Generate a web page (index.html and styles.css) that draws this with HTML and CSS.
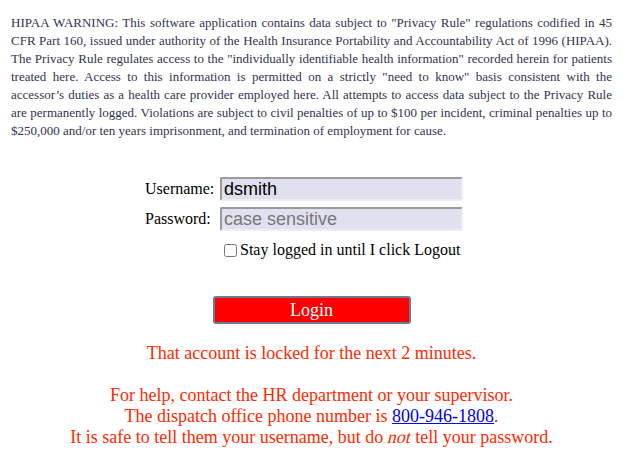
FILE: index.html
```html
<!DOCTYPE html>
<html>
<head>
<meta charset="utf-8">
<link rel="stylesheet" href="styles.css">
</head>
<body>
<div class="page">
  <p class="warning">HIPAA WARNING: This software application contains data subject to "Privacy Rule" regulations codified in 45 CFR Part 160, issued under authority of the Health Insurance Portability and Accountability Act of 1996 (HIPAA). The Privacy Rule regulates access to the "individually identifiable health information" recorded herein for patients treated here. Access to this information is permitted on a strictly "need to know" basis consistent with the accessor’s duties as a health care provider employed here. All attempts to access data subject to the Privacy Rule are permanently logged. Violations are subject to civil penalties of up to $100 per incident, criminal penalties up to $250,000 and/or ten years imprisonment, and termination of employment for cause.</p>
  <form class="login">
    <label class="lbl" for="u">Username:</label>
    <input class="field" id="u" type="text" value="dsmith">
    <label class="lbl" for="p">Password:</label>
    <input class="field" id="p" type="password" placeholder="case sensitive">
    <label class="stay"><input class="chk" type="checkbox">Stay logged in until I click Logout</label>
  </form>
  <div class="actions">
    <button class="btn" type="button">Login</button>
  </div>
  <p class="locked">That account is locked for the next 2 minutes.</p>
  <p class="help">For help, contact the HR department or your supervisor.<br>The dispatch office phone number is <a class="phone" href="#">800-946-1808</a>.<br>It is safe to tell them your username, but do <em class="neg">not</em> tell your password.</p>
</div>
</body>
</html>
```
FILE: styles.css
```css
html, body { background: #fff; }
body {
  margin: 8px;
  font-family: "Liberation Serif", serif;
  color: #000;
}
.page { padding: 0 3px; }
.warning {
  margin: 6px 0 0;
  font-size: 13px;
  line-height: 18px;
  text-align: justify;
  color: #333350;
}
.login {
  display: grid;
  grid-template-columns: 75px 243px;
  row-gap: 6px;
  align-items: center;
  margin: 37px 0 0 134px;
  font-size: 16px;
}
.lbl { line-height: 24px; }
.field {
  box-sizing: border-box;
  width: 243px;
  height: 24px;
  margin: 0;
  padding: 0 2px;
  font-family: "Liberation Sans", Arial, sans-serif;
  font-size: 18px;
  color: #000;
  background: #e0e0ee;
  border: 2px solid #ececf2;
  border-top-color: #9a9a9a;
  border-left-color: #9a9a9a;
  border-radius: 2px;
  outline: none;
}
.field::placeholder { color: #777; }
.stay {
  grid-column: 2;
  display: flex;
  align-items: center;
  margin-top: 3px;
  padding-left: 3px;
  line-height: 20px;
}
.chk {
  width: 13px;
  height: 13px;
  margin: 0 3px 0 1px;
}
.actions {
  display: flex;
  justify-content: center;
  margin-top: 36px;
}
.btn {
  box-sizing: border-box;
  width: 198px;
  height: 28px;
  padding: 0;
  background: #ff0000;
  color: #fff;
  font-family: "Liberation Serif", serif;
  font-size: 18px;
  border: 2px solid #6b7b8c;
  border-radius: 3px;
}
.locked {
  margin: 19px 0 0;
  text-align: center;
  font-size: 18px;
  color: #ff2a00;
}
.help {
  margin: 21px 0 0;
  text-align: center;
  font-size: 18px;
  color: #ff2a00;
}
.phone { color: #0000ee; }
.neg {
  display: inline-block;
  font-family: "Liberation Serif", serif;
  font-style: normal;
  transform: skewX(-14deg);
}
```
